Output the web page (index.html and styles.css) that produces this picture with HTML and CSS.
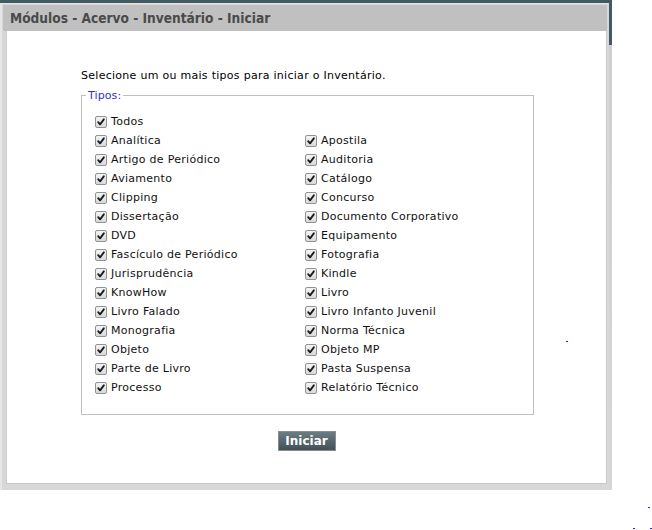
FILE: index.html
```html
<!DOCTYPE html>
<html lang="pt-BR">
<head>
<meta charset="utf-8">
<title>Inventário</title>
<link rel="stylesheet" href="styles.css">
</head>
<body>
<div class="screen">
  <div class="backdrop">
    <div class="window">
      <div class="titlebar">Módulos - Acervo - Inventário - Iniciar</div>
      <div class="body">
        <div class="content">
          <p class="intro">Selecione um ou mais tipos para iniciar o Inventário.</p>
          <fieldset class="types">
            <legend>Tipos:</legend>
            <div class="grid">
              <label class="item"><span class="cb"><svg viewBox="0 0 12 12"><path d="M2.6 6.2 L4.9 8.8 L9.4 2.8" /></svg></span>Todos</label>
              <span></span>
              <label class="item"><span class="cb"><svg viewBox="0 0 12 12"><path d="M2.6 6.2 L4.9 8.8 L9.4 2.8" /></svg></span>Analítica</label>
              <label class="item"><span class="cb"><svg viewBox="0 0 12 12"><path d="M2.6 6.2 L4.9 8.8 L9.4 2.8" /></svg></span>Apostila</label>
              <label class="item"><span class="cb"><svg viewBox="0 0 12 12"><path d="M2.6 6.2 L4.9 8.8 L9.4 2.8" /></svg></span>Artigo de Periódico</label>
              <label class="item"><span class="cb"><svg viewBox="0 0 12 12"><path d="M2.6 6.2 L4.9 8.8 L9.4 2.8" /></svg></span>Auditoria</label>
              <label class="item"><span class="cb"><svg viewBox="0 0 12 12"><path d="M2.6 6.2 L4.9 8.8 L9.4 2.8" /></svg></span>Aviamento</label>
              <label class="item"><span class="cb"><svg viewBox="0 0 12 12"><path d="M2.6 6.2 L4.9 8.8 L9.4 2.8" /></svg></span>Catálogo</label>
              <label class="item"><span class="cb"><svg viewBox="0 0 12 12"><path d="M2.6 6.2 L4.9 8.8 L9.4 2.8" /></svg></span>Clipping</label>
              <label class="item"><span class="cb"><svg viewBox="0 0 12 12"><path d="M2.6 6.2 L4.9 8.8 L9.4 2.8" /></svg></span>Concurso</label>
              <label class="item"><span class="cb"><svg viewBox="0 0 12 12"><path d="M2.6 6.2 L4.9 8.8 L9.4 2.8" /></svg></span>Dissertação</label>
              <label class="item"><span class="cb"><svg viewBox="0 0 12 12"><path d="M2.6 6.2 L4.9 8.8 L9.4 2.8" /></svg></span>Documento Corporativo</label>
              <label class="item"><span class="cb"><svg viewBox="0 0 12 12"><path d="M2.6 6.2 L4.9 8.8 L9.4 2.8" /></svg></span>DVD</label>
              <label class="item"><span class="cb"><svg viewBox="0 0 12 12"><path d="M2.6 6.2 L4.9 8.8 L9.4 2.8" /></svg></span>Equipamento</label>
              <label class="item"><span class="cb"><svg viewBox="0 0 12 12"><path d="M2.6 6.2 L4.9 8.8 L9.4 2.8" /></svg></span>Fascículo de Periódico</label>
              <label class="item"><span class="cb"><svg viewBox="0 0 12 12"><path d="M2.6 6.2 L4.9 8.8 L9.4 2.8" /></svg></span>Fotografia</label>
              <label class="item"><span class="cb"><svg viewBox="0 0 12 12"><path d="M2.6 6.2 L4.9 8.8 L9.4 2.8" /></svg></span>Jurisprudência</label>
              <label class="item"><span class="cb"><svg viewBox="0 0 12 12"><path d="M2.6 6.2 L4.9 8.8 L9.4 2.8" /></svg></span>Kindle</label>
              <label class="item"><span class="cb"><svg viewBox="0 0 12 12"><path d="M2.6 6.2 L4.9 8.8 L9.4 2.8" /></svg></span>KnowHow</label>
              <label class="item"><span class="cb"><svg viewBox="0 0 12 12"><path d="M2.6 6.2 L4.9 8.8 L9.4 2.8" /></svg></span>Livro</label>
              <label class="item"><span class="cb"><svg viewBox="0 0 12 12"><path d="M2.6 6.2 L4.9 8.8 L9.4 2.8" /></svg></span>Livro Falado</label>
              <label class="item"><span class="cb"><svg viewBox="0 0 12 12"><path d="M2.6 6.2 L4.9 8.8 L9.4 2.8" /></svg></span>Livro Infanto Juvenil</label>
              <label class="item"><span class="cb"><svg viewBox="0 0 12 12"><path d="M2.6 6.2 L4.9 8.8 L9.4 2.8" /></svg></span>Monografia</label>
              <label class="item"><span class="cb"><svg viewBox="0 0 12 12"><path d="M2.6 6.2 L4.9 8.8 L9.4 2.8" /></svg></span>Norma Técnica</label>
              <label class="item"><span class="cb"><svg viewBox="0 0 12 12"><path d="M2.6 6.2 L4.9 8.8 L9.4 2.8" /></svg></span>Objeto</label>
              <label class="item"><span class="cb"><svg viewBox="0 0 12 12"><path d="M2.6 6.2 L4.9 8.8 L9.4 2.8" /></svg></span>Objeto MP</label>
              <label class="item"><span class="cb"><svg viewBox="0 0 12 12"><path d="M2.6 6.2 L4.9 8.8 L9.4 2.8" /></svg></span>Parte de Livro</label>
              <label class="item"><span class="cb"><svg viewBox="0 0 12 12"><path d="M2.6 6.2 L4.9 8.8 L9.4 2.8" /></svg></span>Pasta Suspensa</label>
              <label class="item"><span class="cb"><svg viewBox="0 0 12 12"><path d="M2.6 6.2 L4.9 8.8 L9.4 2.8" /></svg></span>Processo</label>
              <label class="item"><span class="cb"><svg viewBox="0 0 12 12"><path d="M2.6 6.2 L4.9 8.8 L9.4 2.8" /></svg></span>Relatório Técnico</label>
            </div>
          </fieldset>
          <div class="actions"><button class="btn" type="button">Iniciar</button></div>
        </div>
      </div>
    </div>
  </div>
  <span class="dot dot-a"></span>
  <span class="dot dot-b"></span>
  <span class="dot dot-c"></span>
  <span class="dot dot-d"></span>
</div>
</body>
</html>
```
FILE: styles.css
```css
html, body {
  margin: 0;
  padding: 0;
  background: #ffffff;
}

.screen {
  position: relative;
  width: 652px;
  height: 530px;
  font-family: "DejaVu Sans", sans-serif;
  font-size: 11px;
  letter-spacing: 0.28px;
  color: #111111;
}

.backdrop {
  width: 609px;
  padding: 3px 3px 0 0;
  background: linear-gradient(to bottom, #435a63 0, #435a63 45px, #cfcfcf 45px, #d6d6d6 100%);
}

.window {
  box-sizing: border-box;
  width: 609px;
  height: 487px;
  background: #d8d8d8;
  border-left: 2px solid #e6e6e6;
  border-top: 1px solid #e2e2e2;
  padding: 1px 2px 6px 1px;
  display: flex;
  flex-direction: column;
}

.titlebar {
  height: 26px;
  background: #c0c0c0;
  color: #4a4a4a;
  font-family: "DejaVu Sans Condensed", "DejaVu Sans", sans-serif;
  font-weight: bold;
  font-size: 13.6px;
  letter-spacing: 0;
  line-height: 26px;
  padding-left: 7px;
}

.body {
  flex: 1;
  background: #ffffff;
  margin-left: 3px;
  border-right: 1px solid #c9c9c9;
  border-bottom: 1px solid #c6c6c6;
  border-left: 1px solid #cccccc;
}

.content {
  width: 453px;
  margin: 0 auto;
  padding-top: 38px;
  transform: translateX(1px);
}

.intro {
  margin: 0;
  line-height: 13px;
  color: #000000;
}

.types {
  margin: 7px 0 0 0;
  padding: 10px 13px 17px 13px;
  border: 1px solid #c0c0c0;
}

.types legend {
  padding: 0 2px;
  margin-left: -9px;
  line-height: 13px;
  letter-spacing: 0.1px;
  color: #3431c6;
}

.grid {
  display: grid;
  grid-template-columns: 210px 1fr;
  grid-auto-rows: 19px;
}

.item {
  display: flex;
  align-items: center;
  gap: 4px;
  white-space: nowrap;
}

.cb {
  box-sizing: border-box;
  width: 12px;
  height: 12px;
  border: 1px solid #8f9394;
  border-radius: 2px;
  background: linear-gradient(to bottom, #f4f4f4, #d9d9d9);
  display: flex;
  flex: none;
}

.cb svg {
  width: 10px;
  height: 10px;
}

.cb path {
  fill: none;
  stroke: #1b1b1b;
  stroke-width: 2.2;
  stroke-linecap: round;
  stroke-linejoin: round;
}

.actions {
  display: flex;
  justify-content: center;
  padding-top: 16px;
  transform: translateX(-1px);
}

.btn {
  box-sizing: border-box;
  width: 58px;
  height: 20px;
  padding: 0;
  border: 1px solid #8c8c8c;
  background: linear-gradient(to bottom, #6b7c82, #435157);
  color: #ffffff;
  font-family: "DejaVu Sans", sans-serif;
  font-weight: bold;
  font-size: 12px;
  letter-spacing: 0;
  line-height: 18px;
}

.dot {
  position: absolute;
  width: 2px;
  height: 1px;
  background: #2a2aff;
}
.dot-a { left: 566px; top: 341px; }
.dot-b { left: 648px; top: 507px; }
.dot-c { left: 633px; top: 528px; }
.dot-d { left: 650px; top: 528px; }
```
